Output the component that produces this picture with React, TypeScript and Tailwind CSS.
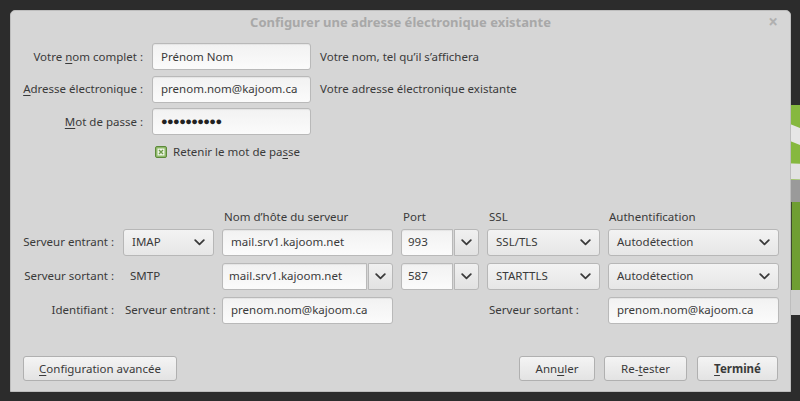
import React from "react";

const Chevron = () => (
  <svg width="11" height="7" viewBox="0 0 11 7" className="shrink-0">
    <path d="M1.2 1.2 L5.5 5.3 L9.8 1.2" fill="none" stroke="#3a3a3a" strokeWidth="1.8" strokeLinecap="round" strokeLinejoin="round" />
  </svg>
);

const inputCls =
  "h-[27px] rounded-[3px] border border-[#b9b9b9] bg-gradient-to-b from-[#f2f2f2] to-[#fbfbfb] flex items-center text-[#3a3a3a] shadow-[inset_0_1px_1px_rgba(0,0,0,0.06)]";

const Input = ({ text, className = "" }: { text: string; className?: string }) => (
  <div className={`${inputCls} px-[8px] ${className}`}>{text}</div>
);

const Select = ({ text, className = "" }: { text: string; className?: string }) => (
  <div
    className={`h-[27px] rounded-[3px] border border-[#b7b7b7] bg-gradient-to-b from-[#f3f3f3] to-[#e6e6e6] flex items-center justify-between pl-[8px] pr-[8px] text-[#3a3a3a] ${className}`}
  >
    <span>{text}</span>
    <Chevron />
  </div>
);

const Combo = ({ text, className = "" }: { text: string; className?: string }) => (
  <div className={`flex h-[27px] ${className}`}>
    <div className={`${inputCls} flex-1 px-[6px] rounded-r-none`}>{text}</div>
    <div className="w-[25px] ml-[1px] h-[27px] rounded-r-[3px] border border-[#b7b7b7] bg-gradient-to-b from-[#f0f0f0] to-[#e2e2e2] flex items-center justify-center">
      <Chevron />
    </div>
  </div>
);

const Btn = ({ children, className = "" }: { children: React.ReactNode; className?: string }) => (
  <div
    className={`h-[25px] rounded-[3px] border border-[#b0b0b0] bg-gradient-to-b from-[#f4f4f4] to-[#e3e3e3] flex items-center justify-center text-[#3a3a3a] ${className}`}
  >
    {children}
  </div>
);

export default function App() {
  return (
    <div
      className="relative w-[800px] h-[401px] bg-[#2c2c2c] overflow-hidden text-[11.5px] text-[#3a3a3a]"
      style={{ fontFamily: '"Noto Sans", "Open Sans", sans-serif' }}
    >
      {/* Background logo peeking out on the right */}
      <svg className="absolute left-[770px] top-[95px]" width="60" height="250" viewBox="0 0 60 250">
        <rect x="0" y="10" width="60" height="230" rx="20" fill="#86b83f" />
        <path d="M10 25 L60 45 L60 62 L10 42 Z" fill="#e6e6e6" />
        <path d="M10 68 L60 70 L60 85 L10 84 Z" fill="#e2e2e2" />
        <rect x="10" y="85" width="50" height="22" fill="#9a9a9a" />
        <rect x="22" y="107" width="38" height="88" fill="#6f9e32" />
        <rect x="10" y="107" width="12" height="88" fill="#3f4a2e" />
        <rect x="10" y="195" width="50" height="25" fill="#cfcfcf" />
        <rect x="10" y="220" width="50" height="30" fill="#2c2c2c" />
      </svg>

      {/* Dialog window */}
      <div className="absolute left-[10px] top-[10px] w-[781px] h-[382px] bg-[#d6d6d6] rounded-t-[5px] border border-[#bdbdbd] flex flex-col">
        {/* Title bar */}
        <div className="relative h-[23px] flex items-center justify-center">
          <span className="font-bold text-[13px] text-[#a8a8a8]">Configurer une adresse électronique existante</span>
          <span className="absolute right-[12px] top-[1px] text-[17px] leading-[20px] font-bold text-[#b0b0b0]">×</span>
        </div>

        {/* Identity section */}
        <div className="mt-[9px] flex flex-col gap-[5.5px]">
          <div className="flex items-center">
            <div className="w-[133px] text-right pr-[1px]">
              Votre <span className="underline underline-offset-2">n</span>om complet :
            </div>
            <Input text="Prénom Nom" className="ml-[8px] w-[159px]" />
            <div className="ml-[9px]">Votre nom, tel qu’il s’affichera</div>
          </div>
          <div className="flex items-center">
            <div className="w-[133px] text-right pr-[1px]">
              <span className="underline underline-offset-2">A</span>dresse électronique :
            </div>
            <Input text="prenom.nom@kajoom.ca" className="ml-[8px] w-[159px]" />
            <div className="ml-[9px]">Votre adresse électronique existante</div>
          </div>
          <div className="flex items-center">
            <div className="w-[133px] text-right pr-[1px]">
              <span className="underline underline-offset-2">M</span>ot de passe :
            </div>
            <div className={`${inputCls} ml-[8px] w-[159px] px-[8px]`}>
              <span className="text-[#222] tracking-[-0.6px] text-[11px]">●●●●●●●●●●</span>
            </div>
          </div>
          <div className="flex items-center mt-[4px] ml-[144px] h-[14px]">
            <div className="w-[12px] h-[12px] rounded-[2px] bg-[#8fb86a] border border-[#5c8a3a] flex items-center justify-center">
              <svg width="8" height="8" viewBox="0 0 8 8">
                <rect x="0.5" y="0.5" width="7" height="7" fill="#eef5e6" />
                <path d="M2 2 L6 6 M6 2 L2 6" stroke="#6e9a4a" strokeWidth="1.4" />
              </svg>
            </div>
            <span className="ml-[6px]">
              Retenir le mot de pa<span className="underline underline-offset-2">s</span>se
            </span>
          </div>
        </div>

        {/* Server section */}
        <div className="mt-[51px] grid grid-cols-[104px_91px_171px_78px_113px_171px] gap-x-[8px] items-center">
          <div />
          <div />
          <div className="pl-[2px] h-[14px] leading-[14px]">Nom d’hôte du serveur</div>
          <div className="pl-[2px] h-[14px] leading-[14px]">Port</div>
          <div className="pl-[2px] h-[14px] leading-[14px]">SSL</div>
          <div className="pl-[1px] h-[14px] leading-[14px]">Authentification</div>
        </div>

        <div className="mt-[5px] grid grid-cols-[104px_91px_171px_78px_113px_171px] gap-x-[8px] gap-y-[7px] items-center">
          <div className="text-right pr-[1px]">Serveur entrant :</div>
          <Select text="IMAP" />
          <Input text="mail.srv1.kajoom.net" />
          <Combo text="993" />
          <Select text="SSL/TLS" />
          <Select text="Autodétection" />

          <div className="text-right pr-[1px]">Serveur sortant :</div>
          <div className="pl-[7px]">SMTP</div>
          <Combo text="mail.srv1.kajoom.net" />
          <Combo text="587" />
          <Select text="STARTTLS" />
          <Select text="Autodétection" />

          <div className="text-right pr-[1px]">Identifiant :</div>
          <div className="pl-[2px] whitespace-nowrap">Serveur entrant :</div>
          <Input text="prenom.nom@kajoom.ca" />
          <div />
          <div className="pl-[2px] whitespace-nowrap">Serveur sortant :</div>
          <Input text="prenom.nom@kajoom.ca" />
        </div>

        {/* Buttons */}
        <div className="mt-auto mb-[10px] flex items-center px-[12px]">
          <Btn className="w-[154px]">
            <span>
              <span className="underline underline-offset-2">C</span>onfiguration avancée
            </span>
          </Btn>
          <div className="flex-1" />
          <Btn className="w-[76px]">
            <span>
              Ann<span className="underline underline-offset-2">u</span>ler
            </span>
          </Btn>
          <Btn className="w-[83px] ml-[9px]">
            <span>
              Re-<span className="underline underline-offset-2">t</span>ester
            </span>
          </Btn>
          <Btn className="w-[81px] ml-[10px] font-bold">
            <span>
              <span className="underline underline-offset-2">T</span>erminé
            </span>
          </Btn>
        </div>
      </div>
    </div>
  );
}
